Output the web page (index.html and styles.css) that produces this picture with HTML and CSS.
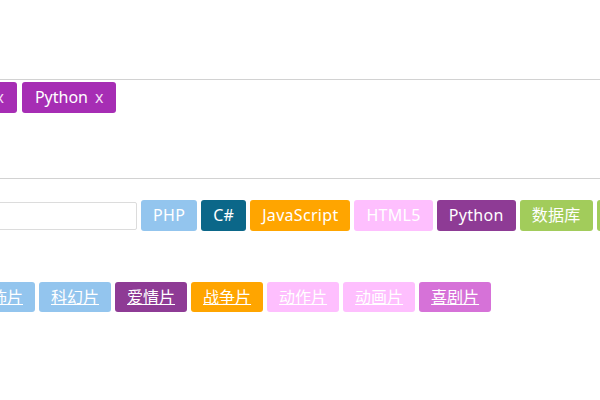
FILE: index.html
```html
<!DOCTYPE html>
<html lang="zh-CN">
<head>
    <meta charset="UTF-8">
    <title>标签</title>
    <link rel="stylesheet" href="styles.css">
</head>
<body>
    <div class="page">
        <hr class="line first">
        <div class="row chosen">
            <span class="tag purple clip-a">Java<span class="close">x</span></span>
            <span class="tag purple">Python<span class="close">x</span></span>
        </div>

        <hr class="line second">
        <div class="row picker">
            <input class="search" type="text">
            <span class="tag sky">PHP</span>
            <span class="tag teal">C#</span>
            <span class="tag orange">JavaScript</span>
            <span class="tag pink">HTML5</span>
            <span class="tag plum">Python</span>
            <span class="tag green">数据库</span>
            <span class="tag green">算法</span>
        </div>

        <div class="row movies">
            <a class="tag sky clip-c" href="#">恐怖片</a>
            <a class="tag sky" href="#">科幻片</a>
            <a class="tag plum" href="#">爱情片</a>
            <a class="tag orange" href="#">战争片</a>
            <a class="tag pink" href="#">动作片</a>
            <a class="tag pink" href="#">动画片</a>
            <a class="tag orchid" href="#">喜剧片</a>
        </div>
    </div>
</body>
</html>
```

FILE: styles.css
```css
body {
    margin: 0;
    font-family: "Noto Sans", "Noto Sans CJK SC", sans-serif;
    background: #fff;
    overflow: hidden;
}
.page {
    width: 600px;
}
.line {
    border: none;
    border-top: 1px solid #d2d2d2;
    margin: 0;
}
.line.first { margin-top: 79px; }
.line.second { margin-top: 65px; }
.row {
    display: flex;
    flex-wrap: nowrap;
    gap: 4px;
    white-space: nowrap;
}
.chosen { margin-top: 2px; gap: 5px; }
.picker { margin-top: 21px; align-items: center; }
.movies { margin-top: 51px; }
.tag {
    display: inline-block;
    flex: none;
    height: 31px;
    line-height: 31px;
    padding: 0 12px;
    border-radius: 3px;
    color: #fff;
    font-size: 16px;
}
.picker .tag { letter-spacing: 0.3px; }
.movies .tag { height: 30px; line-height: 30px; text-decoration: underline; }
.chosen .tag { padding: 0 13px; }
.close { margin-left: 7px; color: #f3dcf5; }
.clip-a { margin-left: -55px; }
.clip-c { margin-left: -37px; }
.search {
    flex: none;
    width: 200px;
    height: 28px;
    box-sizing: border-box;
    margin: 0 0 0 -63px;
    border: 1px solid #dcdcdc;
    border-radius: 2px;
    padding: 0 6px;
}
.purple { background: #a62db4; }
.sky { background: #93c5ee; }
.teal { background: #0b6789; }
.orange { background: #ffa500; }
.pink { background: #febffe; }
.plum { background: #8e3b95; }
.green { background: #a2cc5b; }
.orchid { background: #d672d8; }
```
